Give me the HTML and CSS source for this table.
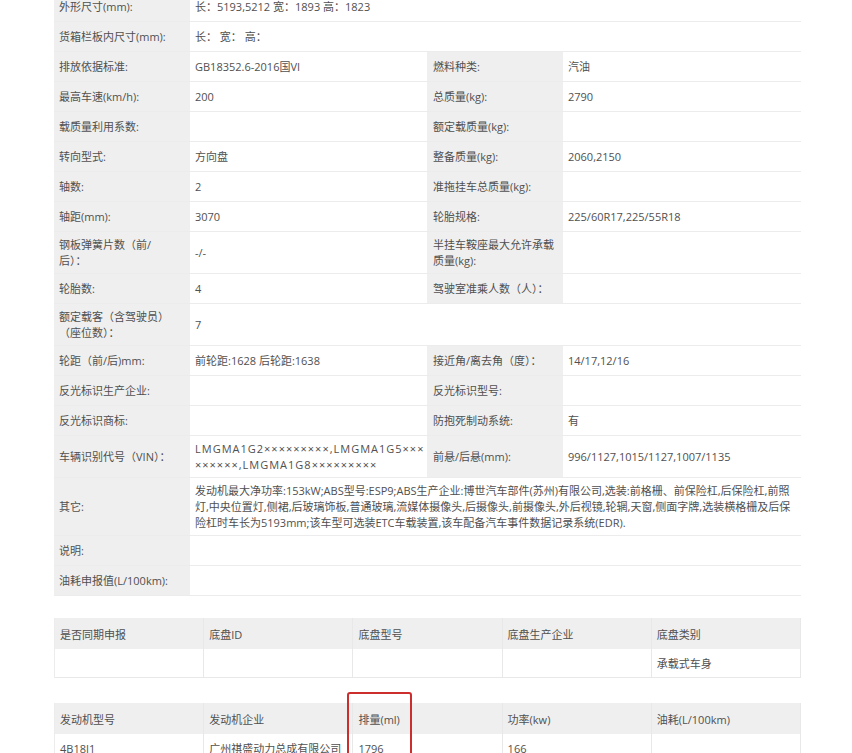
FILE: index.html
```html
<!DOCTYPE html>
<html lang="zh-CN">
<head>
<meta charset="utf-8">
<title>车辆参数</title>
<link rel="stylesheet" href="styles.css">
</head>
<body>
<div class="page">
  <div class="spec">
    <div class="k">外形尺寸(mm):</div>
    <div class="v span3">长：5193,5212 宽：1893 高：1823</div>

    <div class="k">货箱栏板内尺寸(mm):</div>
    <div class="v span3">长： 宽： 高：</div>

    <div class="k">排放依据标准:</div>
    <div class="v">GB18352.6-2016国VI</div>
    <div class="k k2">燃料种类:</div>
    <div class="v">汽油</div>

    <div class="k">最高车速(km/h):</div>
    <div class="v">200</div>
    <div class="k k2">总质量(kg):</div>
    <div class="v">2790</div>

    <div class="k">载质量利用系数:</div>
    <div class="v"></div>
    <div class="k k2">额定载质量(kg):</div>
    <div class="v"></div>

    <div class="k">转向型式:</div>
    <div class="v">方向盘</div>
    <div class="k k2">整备质量(kg):</div>
    <div class="v">2060,2150</div>

    <div class="k">轴数:</div>
    <div class="v">2</div>
    <div class="k k2">准拖挂车总质量(kg):</div>
    <div class="v"></div>

    <div class="k">轴距(mm):</div>
    <div class="v">3070</div>
    <div class="k k2">轮胎规格:</div>
    <div class="v">225/60R17,225/55R18</div>

    <div class="k"><span>钢板弹簧片数（前/<br>后）：</span></div>
    <div class="v">-/-</div>
    <div class="k k2">半挂车鞍座最大允许承载质量(kg):</div>
    <div class="v"></div>

    <div class="k">轮胎数:</div>
    <div class="v">4</div>
    <div class="k k2">驾驶室准乘人数（人）：</div>
    <div class="v"></div>

    <div class="k">额定载客（含驾驶员）（座位数）：</div>
    <div class="v span3">7</div>

    <div class="k">轮距（前/后)mm:</div>
    <div class="v">前轮距:1628 后轮距:1638</div>
    <div class="k k2">接近角/离去角（度）：</div>
    <div class="v">14/17,12/16</div>

    <div class="k">反光标识生产企业:</div>
    <div class="v"></div>
    <div class="k k2">反光标识型号:</div>
    <div class="v"></div>

    <div class="k">反光标识商标:</div>
    <div class="v"></div>
    <div class="k k2">防抱死制动系统:</div>
    <div class="v">有</div>

    <div class="k">车辆识别代号（VIN）：</div>
    <div class="v vin"><span>LMGMA1G2×××××××××,LMGMA1G5×××<br>××××××,LMGMA1G8×××××××××</span></div>
    <div class="k k2">前悬/后悬(mm):</div>
    <div class="v">996/1127,1015/1127,1007/1135</div>

    <div class="k">其它:</div>
    <div class="v span3">发动机最大净功率:153kW;ABS型号:ESP9;ABS生产企业:博世汽车部件(苏州)有限公司,选装:前格栅、前保险杠,后保险杠,前照灯,中央位置灯,侧裙,后玻璃饰板,普通玻璃,流媒体摄像头,后摄像头,前摄像头,外后视镜,轮辋,天窗,侧面字牌,选装横格栅及后保险杠时车长为5193mm;该车型可选装ETC车载装置,该车配备汽车事件数据记录系统(EDR).</div>

    <div class="k">说明:</div>
    <div class="v span3"></div>

    <div class="k">油耗申报值(L/100km):</div>
    <div class="v span3"></div>
  </div>

  <div class="grid5 chassis">
    <div class="h">是否同期申报</div>
    <div class="h">底盘ID</div>
    <div class="h">底盘型号</div>
    <div class="h">底盘生产企业</div>
    <div class="h">底盘类别</div>
    <div class="c"></div>
    <div class="c"></div>
    <div class="c"></div>
    <div class="c"></div>
    <div class="c">承载式车身</div>
  </div>

  <div class="grid5 engine">
    <div class="h">发动机型号</div>
    <div class="h">发动机企业</div>
    <div class="h marked">排量(ml)<span class="mark"></span></div>
    <div class="h">功率(kw)</div>
    <div class="h">油耗(L/100km)</div>
    <div class="c">4B18J1</div>
    <div class="c">广州祺盛动力总成有限公司</div>
    <div class="c">1796</div>
    <div class="c">166</div>
    <div class="c"></div>
  </div>
</div>
</body>
</html>
```

FILE: styles.css
```css
* {
  box-sizing: border-box;
}

html, body {
  margin: 0;
  background: #ffffff;
  overflow: hidden;
}

body {
  font-family: "Open Sans", "Noto Sans CJK SC", sans-serif;
  font-size: 11px;
  color: #505050;
}

.page {
  width: 747px;
  margin: -8px 0 0 54px;
}

.spec {
  display: grid;
  grid-template-columns: 136px 237px 136px 238px;
  border-right: 1px solid #e6e6e6;
}

.spec > div {
  min-height: 30px;
  padding: 4.5px 5px;
  line-height: 16px;
  border-bottom: 1px solid #ececec;
  display: flex;
  align-items: center;
}

.k {
  background: #efefef;
}

.spec > .k {
  padding-right: 8px;
}

.spec > .k2 {
  padding-left: 6px;
  padding-right: 4px;
}

.v {
  background: #ffffff;
}

.span3 {
  grid-column: span 3;
}

.vin {
  letter-spacing: 1px;
}

.grid5 {
  display: grid;
  grid-template-columns: repeat(5, 1fr);
  border-left: 1px solid #ececec;
}

.chassis {
  margin-top: 22px;
}

.engine {
  margin-top: 25px;
}

.grid5 > div {
  display: flex;
  align-items: center;
  padding: 0 5px;
  border-right: 1px solid #e8e8e8;
  white-space: nowrap;
}

.h {
  height: 31px;
  background: #efefef;
}

.c {
  height: 29px;
  background: #ffffff;
  border-bottom: 1px solid #e8e8e8;
}

.marked {
  position: relative;
}

.mark {
  position: absolute;
  left: -6px;
  top: -11px;
  width: 65px;
  height: 90px;
  border: 2px solid #cc2d2d;
  border-radius: 3px;
}
```
